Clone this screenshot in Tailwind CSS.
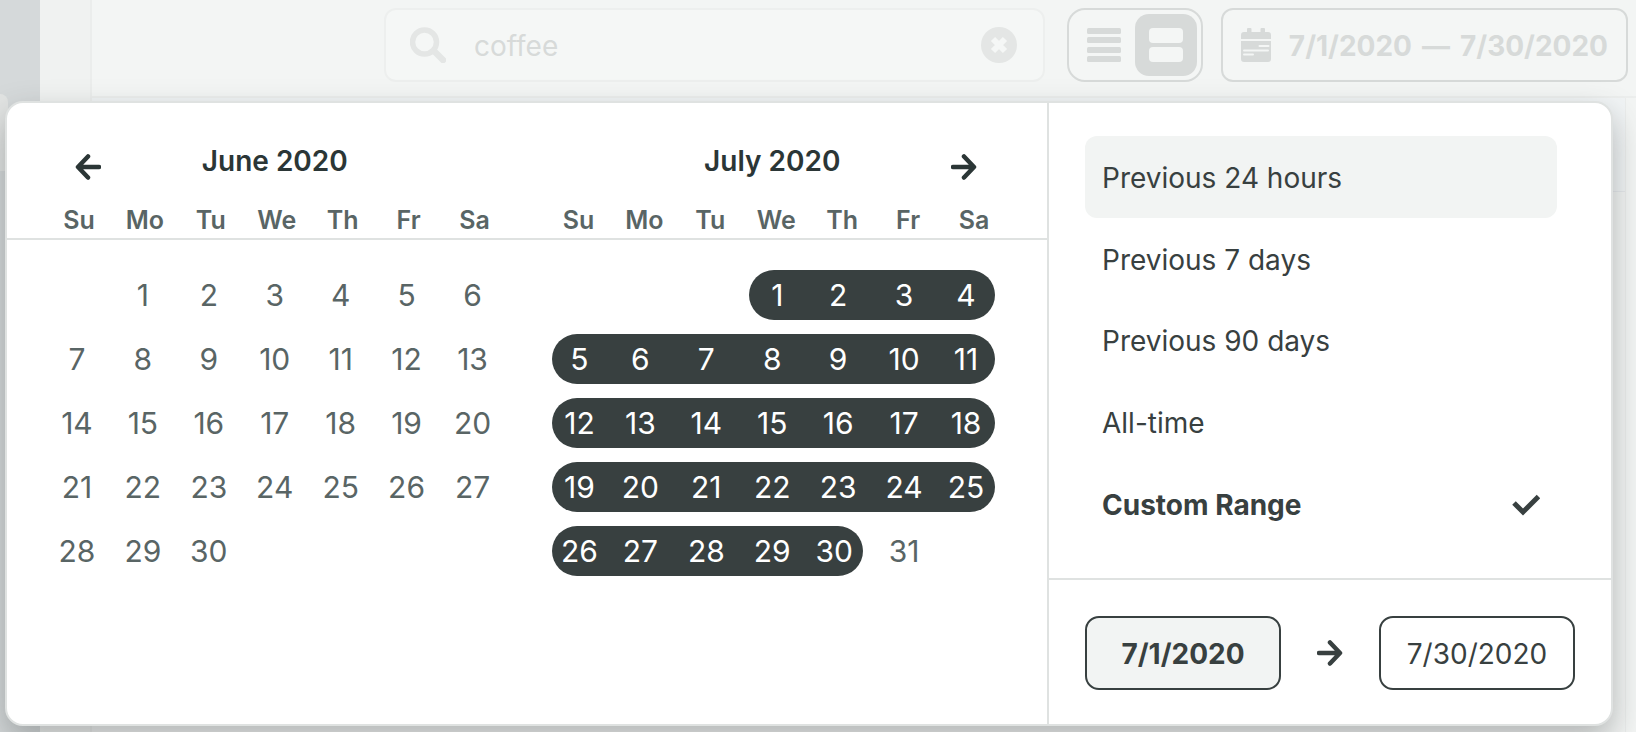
<!DOCTYPE html>
<html lang="en">
<head>
    <meta charset="UTF-8">
    <meta name="viewport" content="width=device-width, initial-scale=1.0">
    <title>Date range</title>
    <script src="https://cdn.jsdelivr.net/npm/@tailwindcss/browser@4"></script>
</head>
<body class="font-['Inter',sans-serif] bg-[#f3f5f4] text-[#384040] text-[28px] leading-9 h-screen overflow-hidden">
    <div class="relative flex h-full">
        <!-- Side navigation, dimmed -->
        <div class="w-10 shrink-0 pt-[94px] bg-[#d5d9da]">
            <div class="w-2 h-[77px] rounded-tr-lg bg-[#e2e4e3]"></div>
        </div>
        <div class="w-[52px] shrink-0 bg-[#f0f2f1] border-r-2 border-[#ebedec]"></div>

        <!-- Toolbar, dimmed -->
        <div class="flex flex-col flex-1">
            <header class="flex justify-end gap-[18px] pt-2 pr-2 pb-3.5 pl-[292px] border-b-2 border-[#eceeed] text-[#d7dad9]">
                <div class="flex flex-1 items-center h-[74px] pl-6 pr-[26px] rounded-[12px] border-2 border-[#edefee] bg-[#f5f7f6] text-[#e4e6e5]">
                    <svg class="size-9 shrink-0" viewBox="0 0 36 36" fill="none" stroke="currentColor">
                        <circle cx="14.5" cy="15" r="12" stroke-width="5.5"/>
                        <path d="M24 24l9 9" stroke-width="6.5" stroke-linecap="round"/>
                    </svg>
                    <input type="text" value="coffee" aria-label="Search" class="flex-1 min-w-0 pt-0.5 pl-7 bg-transparent outline-none text-[#d7dad9]">
                    <button type="button" aria-label="Clear search">
                        <svg class="size-9" viewBox="0 0 36 36">
                            <circle cx="18" cy="18" r="18" fill="currentColor"/>
                            <path d="M12 12l12 12M24 12l-12 12" stroke="#f5f7f6" stroke-width="6"/>
                        </svg>
                    </button>
                </div>

                <div class="flex items-center ml-1 p-1 gap-3 pl-[18px] rounded-[18px] border-2 border-[#d7dad9] bg-[#f4f6f5]">
                    <button type="button" aria-label="List view" class="w-9">
                        <svg class="w-[34px] h-[34px]" viewBox="0 0 34 34" fill="currentColor">
                            <rect width="34" height="6" rx="1.5"/>
                            <rect y="9" width="34" height="6" rx="1.5"/>
                            <rect y="19" width="34" height="6" rx="1.5"/>
                            <rect y="28" width="34" height="6" rx="1.5"/>
                        </svg>
                    </button>
                    <button type="button" aria-label="Card view" class="flex items-center justify-center size-[62px] rounded-[14px] bg-[#d7dad9]">
                        <svg class="w-[34px] h-[34px]" viewBox="0 0 34 34" fill="#f4f6f5">
                            <rect width="34" height="15" rx="4"/>
                            <rect y="19" width="34" height="15" rx="4"/>
                        </svg>
                    </button>
                </div>

                <button type="button" class="flex items-center gap-[18px] px-[18px] rounded-[12px] border-2 border-[#d7dad9] bg-[#f4f6f5] font-bold whitespace-nowrap">
                    <svg class="w-[30px] h-[34px]" viewBox="0 0 30 34">
                        <path fill="currentColor" d="M7 0h2.500a1 1 0 0 1 1 1v3h9V1a1 1 0 0 1 1-1H23a1 1 0 0 1 1 1v3h3a3 3 0 0 1 3 3v4H0V7a3 3 0 0 1 3-3h3V1a1 1 0 0 1 1-1zM0 13h30v18a3 3 0 0 1-3 3H3a3 3 0 0 1-3-3z"/>
                        <path stroke="#f4f6f5" stroke-width="2" stroke-linecap="round" d="M18.500 18h9M3 22.500h24M3 26.500h9"/>
                    </svg>
                    <span class="flex gap-2.5 pt-0.5"><span>7/1/2020</span><span>—</span><span>7/30/2020</span></span>
                </button>
            </header>
            <main class="flex-1 mr-2.5 border-r border-[#ebedec]">
                <div class="h-[94px] border-b border-[#e6e9ec] bg-[#f1f4f5]"></div>
            </main>
        </div>

        <!-- Date range popover -->
        <div class="absolute left-[5px] right-[23px] top-[101px] bottom-1.5 flex rounded-[18px] border-2 border-[#dfe2e1] bg-white shadow-[0_14px_32px_rgba(56,64,64,0.35)]">
            <div class="flex-1">
                <div class="h-[137px] pt-10 border-b-2 border-[#dfe2e1] text-[#2b3636]">
                    <div class="grid grid-cols-2 gap-9 pl-[37px] pr-11">
                        <div class="grid grid-cols-[1fr_auto_1fr] items-start">
                            <button type="button" aria-label="Previous month" class="pt-[11px] pl-[31px]">
                                <svg class="size-[26px]" viewBox="0 0 26 26" fill="none" stroke="currentColor" stroke-width="4.500" stroke-linecap="round" stroke-linejoin="round">
                                    <path d="M13 2.500L3 13l10 10.500M3.500 13H24"/>
                                </svg>
                            </button>
                            <h2 class="font-semibold">June 2020</h2>
                        </div>
                        <div class="grid grid-cols-[1fr_auto_1fr] items-start">
                            <h2 class="col-start-2 font-semibold">July 2020</h2>
                            <button type="button" aria-label="Next month" class="flex justify-end pt-[11px] pr-[26px]">
                                <svg class="size-[26px]" viewBox="0 0 26 26" fill="none" stroke="currentColor" stroke-width="4.500" stroke-linecap="round" stroke-linejoin="round">
                                    <path d="M13 2.500L23 13L13 23.500M22.500 13H2"/>
                                </svg>
                            </button>
                        </div>
                    </div>
                    <div class="grid grid-cols-2 gap-[38px] mt-6 pl-[39px] pr-10 text-[25px] leading-8 font-semibold text-[#596565]">
                        <div class="grid grid-cols-7 text-center">
                            <span>Su</span><span>Mo</span><span>Tu</span><span>We</span><span>Th</span><span>Fr</span><span>Sa</span>
                        </div>
                        <div class="grid grid-cols-7 text-center">
                            <span>Su</span><span>Mo</span><span>Tu</span><span>We</span><span>Th</span><span>Fr</span><span>Sa</span>
                        </div>
                    </div>
                </div>

                <div class="grid grid-cols-2 gap-9 items-start pt-[23px] pl-[37px] pr-11 text-[30px] text-[#596565]">
                    <table id="june" aria-label="June 2020" class="w-full table-fixed"></table>
                    <table id="july" aria-label="July 2020" class="w-full table-fixed"></table>
                </div>
            </div>

            <div class="flex flex-col w-[564px] border-l-2 border-[#dfe2e1]">
                <div class="flex-1 pt-[33px] pl-9 pr-[54px]">
                    <button type="button" class="flex items-center w-full h-[82px] px-[17px] pt-0.5 rounded-[12px] bg-[#f2f4f3]">Previous 24 hours</button>
                    <button type="button" class="flex items-center w-full h-[82px] px-[17px] pt-0.5 rounded-[12px]">Previous 7 days</button>
                    <button type="button" class="flex items-center w-full h-[82px] px-[17px] rounded-[12px]">Previous 90 days</button>
                    <button type="button" class="flex items-center w-full h-[82px] px-[17px] rounded-[12px]">All-time</button>
                    <button type="button" class="flex items-center justify-between w-full h-[82px] px-[17px] rounded-[12px] font-bold">
                        Custom Range
                        <svg class="w-7 h-[22px]" viewBox="0 0 28 22" fill="none" stroke="currentColor" stroke-width="5">
                            <path d="M2 9l9 9L26.500 2.500"/>
                        </svg>
                    </button>
                </div>
                <div class="flex items-center justify-between h-[146px] pt-0.5 px-9 border-t-2 border-[#dfe2e1]">
                    <input type="text" value="7/1/2020" aria-label="Start date" class="w-[196px] h-[74px] pt-0.5 text-center font-bold rounded-[14px] border-2 border-[#384040] bg-[#f2f4f3]">
                    <svg class="size-[26px]" viewBox="0 0 26 26" fill="none" stroke="currentColor" stroke-width="4.500" stroke-linecap="round" stroke-linejoin="round">
                        <path d="M13 2.500L23 13L13 23.500M22.500 13H2"/>
                    </svg>
                    <input type="text" value="7/30/2020" aria-label="End date" class="w-[196px] h-[74px] pt-0.5 text-center rounded-[14px] border-2 border-[#384040]">
                </div>
            </div>
        </div>
    </div>

    <script>
        // offset = weekday of the 1st, from/to = selected days
        function renderMonth(id, offset, days, from, to) {
            const table = document.getElementById(id);
            const body = table.createTBody();

            for (let start = 1 - offset; start <= days; start += 7) {
                const row = body.insertRow();
                for (let i = 0; i < 7; i++) {
                    const day = start + i;
                    const cell = row.insertCell();
                    cell.className = "h-16 p-0";
                    if (day < 1 || day > days) continue;

                    const button = document.createElement("button");
                    button.type = "button";
                    button.textContent = day;
                    button.className = "block w-full h-[50px]";

                    if (day >= from && day <= to) {
                        button.classList.add("bg-[#384040]", "text-white");
                        if (i === 0 || day === from) {
                            cell.classList.add("pl-2.5");
                            button.classList.add("rounded-l-full");
                        }
                        if (i === 6 || day === to) {
                            cell.classList.add("pr-2");
                            button.classList.add("rounded-r-full");
                        }
                    }
                    cell.appendChild(button);
                }
            }
        }

        renderMonth("june", 1, 30, 0, 0);
        renderMonth("july", 3, 31, 1, 30);
    </script>
</body>
</html>
